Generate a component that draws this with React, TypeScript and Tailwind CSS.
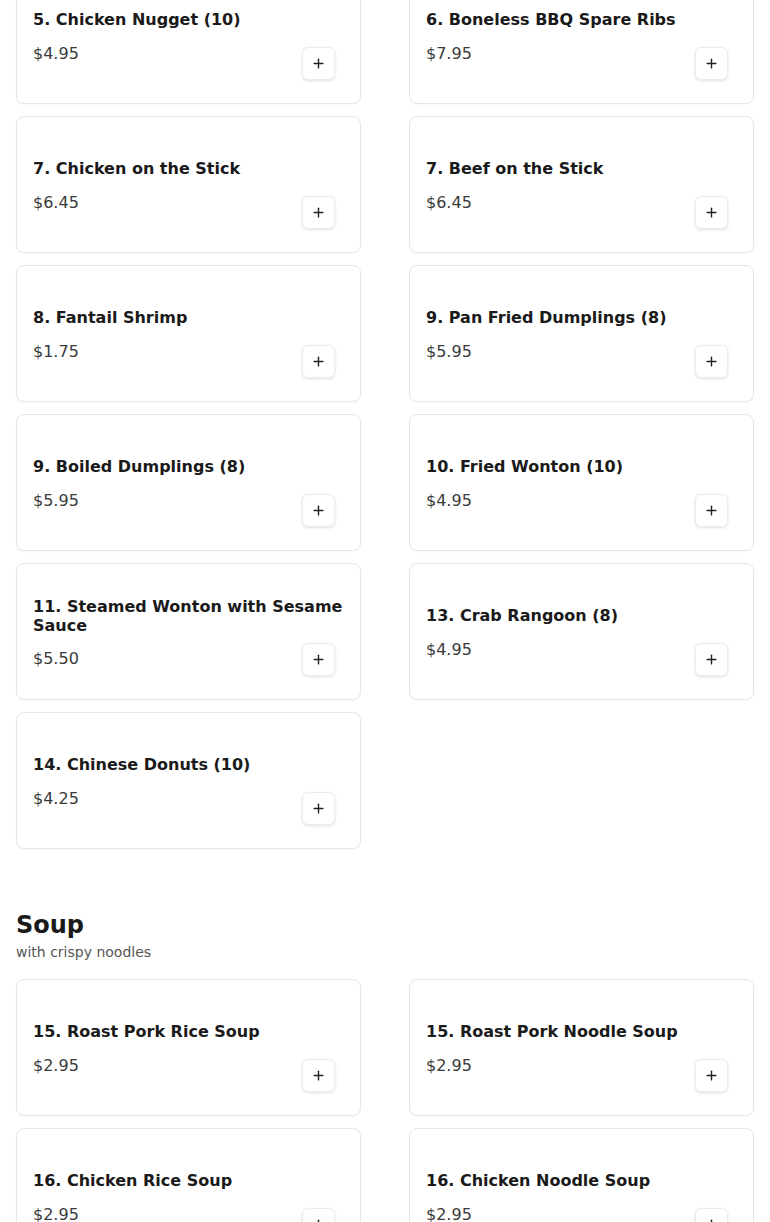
import { Plus } from 'lucide-react';

type Item = { name: string; price: string };

const appetizers: Item[] = [
  { name: '5. Chicken Nugget (10)', price: '$4.95' },
  { name: '6. Boneless BBQ Spare Ribs', price: '$7.95' },
  { name: '7. Chicken on the Stick', price: '$6.45' },
  { name: '7. Beef on the Stick', price: '$6.45' },
  { name: '8. Fantail Shrimp', price: '$1.75' },
  { name: '9. Pan Fried Dumplings (8)', price: '$5.95' },
  { name: '9. Boiled Dumplings (8)', price: '$5.95' },
  { name: '10. Fried Wonton (10)', price: '$4.95' },
  { name: '11. Steamed Wonton with Sesame Sauce', price: '$5.50' },
  { name: '13. Crab Rangoon (8)', price: '$4.95' },
  { name: '14. Chinese Donuts (10)', price: '$4.25' },
];

const soups: Item[] = [
  { name: '15. Roast Pork Rice Soup', price: '$2.95' },
  { name: '15. Roast Pork Noodle Soup', price: '$2.95' },
  { name: '16. Chicken Rice Soup', price: '$2.95' },
  { name: '16. Chicken Noodle Soup', price: '$2.95' },
];

function MenuCard({ item }: { item: Item }) {
  return (
    <div className="relative h-[137px] flex items-center bg-white border border-[#e6e6e6] rounded-lg px-4 shadow-[0_1px_2px_rgba(0,0,0,0.03)]">
      <div className="flex-1 pt-[5px]">
        <h3 className="text-base font-bold leading-[1.2] text-[#1a1a1a]">{item.name}</h3>
        <p className="mt-3 text-base leading-6 text-[#3a3a3a]">{item.price}</p>
      </div>
      {/* add button overlays the card corner */}
      <button className="absolute right-[25px] bottom-[23px] w-[33px] h-[33px] flex items-center justify-center bg-white border border-[#ececec] rounded-md shadow-[0_1px_3px_rgba(0,0,0,0.12)] text-[#222]">
        <Plus size={15} strokeWidth={2.25} />
      </button>
    </div>
  );
}

export default function App() {
  return (
    <div className="bg-white min-h-screen px-4 font-['DejaVu_Sans','Liberation_Sans',sans-serif] overflow-hidden">
      {/* Appetizers (continued) */}
      <div className="grid grid-cols-2 gap-x-12 gap-y-3 -mt-[33px]">
        {appetizers.map((item, i) => (
          <MenuCard key={i} item={item} />
        ))}
      </div>

      {/* Soup */}
      <div className="mt-[60px]">
        <h2 className="text-2xl font-bold leading-8 text-[#1a1a1a]">Soup</h2>
        <p className="mt-[1px] text-sm leading-5 text-[#555]">with crispy noodles</p>
      </div>
      <div className="grid grid-cols-2 gap-x-12 gap-y-3 mt-[17px] pb-10">
        {soups.map((item, i) => (
          <MenuCard key={i} item={item} />
        ))}
      </div>
    </div>
  );
}
